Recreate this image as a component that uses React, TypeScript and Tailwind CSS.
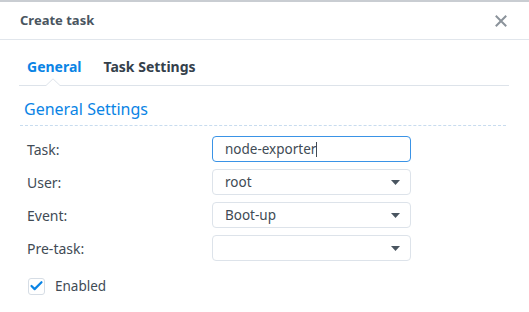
import { Check } from "lucide-react";

const font = { fontFamily: '"Noto Sans", "Open Sans", Arial, sans-serif' };

function Caret() {
  return (
    <svg width="9" height="5" viewBox="0 0 9 5" className="shrink-0">
      <path d="M0 0h9L4.5 5z" fill="#4a5560" />
    </svg>
  );
}

function Row({ label, children }: { label: string; children: React.ReactNode }) {
  return (
    <div className="flex items-center h-[26px]">
      <div className="w-[192px] pl-[7px] text-[14px] text-[#414b55]">{label}</div>
      {children}
    </div>
  );
}

function SelectBox({ value }: { value: string }) {
  return (
    <div className="w-[199px] h-[26px] flex items-center justify-between pl-[12px] pr-[10px] rounded-[4px] border border-[#dde3ea] bg-white text-[13.5px] text-[#414b55]">
      <span>{value}</span>
      <Caret />
    </div>
  );
}

export default function App() {
  return (
    <div className="w-[529px] h-[312px] bg-white overflow-hidden relative" style={font}>
      <div className="h-[2px] bg-[#c9cdd2]" />
      {/* Header */}
      <div className="h-[38px] flex items-center justify-between pl-[20px] pr-[22px] border-b border-[#e1e6ec]">
        <span className="text-[13px] font-bold text-[#4a5560]">Create task</span>
        <svg width="12" height="12" viewBox="0 0 12 12">
          <path d="M1.5 1.5l9 9M10.5 1.5l-9 9" stroke="#8b939b" strokeWidth="2" strokeLinecap="square" />
        </svg>
      </div>

      {/* Tabs */}
      <div className="ml-[19px] mr-[20px] relative h-[46px] border-b border-[#dde3ea] flex items-end pb-[8px] pl-[8px] gap-[22px]">
        <span className="text-[14px] font-bold text-[#0a84e5]">General</span>
        <span className="text-[14px] font-bold text-[#34404b]">Task Settings</span>
        <svg width="14" height="8" viewBox="0 0 14 8" className="absolute left-[27px] bottom-[-1px]">
          <path d="M0 7.5h14" stroke="white" strokeWidth="2" />
          <path d="M0 7.5L7 0.8L14 7.5" fill="white" stroke="#dde3ea" strokeWidth="1" />
        </svg>
      </div>

      {/* Section title */}
      <div className="ml-[20px] mr-[23px] mt-[13px] pb-[6px] pl-[4px] border-b border-dashed border-[#c8dcef] text-[16px] leading-[20px] text-[#0a84e5]">
        General Settings
      </div>

      {/* Form */}
      <div className="pl-[20px] pt-[10px] flex flex-col gap-[7px]">
        <Row label="Task:">
          <div className="w-[199px] h-[26px] flex items-center pl-[12px] rounded-[4px] border border-[#3a93e6] bg-white text-[13.5px] text-[#414b55]">
            node-exporter<span className="w-px h-[15px] bg-[#414b55]" />
          </div>
        </Row>
        <Row label="User:">
          <SelectBox value="root" />
        </Row>
        <Row label="Event:">
          <SelectBox value="Boot-up" />
        </Row>
        <Row label="Pre-task:">
          <SelectBox value="" />
        </Row>
        <div className="flex items-center h-[26px] pl-[8px] gap-[10px] mt-[5px]">
          <div className="w-[17px] h-[17px] rounded-[3px] border border-[#d6dde5] flex items-center justify-center">
            <Check size={16} strokeWidth={3.5} color="#0a84e5" />
          </div>
          <span className="text-[13.5px] text-[#414b55]">Enabled</span>
        </div>
      </div>
    </div>
  );
}
